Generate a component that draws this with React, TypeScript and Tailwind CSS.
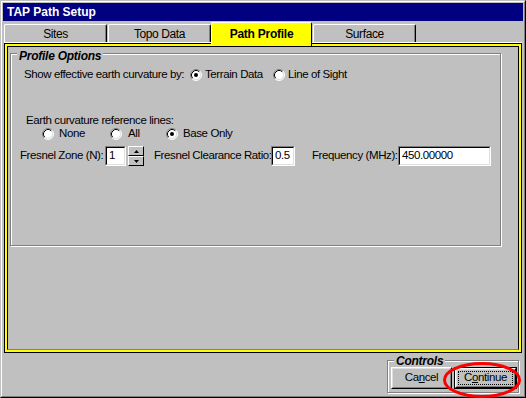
import React from "react";

const ui = "font-['Liberation_Sans',Arial,sans-serif] tracking-[-0.4px] whitespace-nowrap";
const heading = "font-['Liberation_Sans',Arial,sans-serif] font-bold italic tracking-[-0.25px]";

function Radio({ checked = false }: { checked?: boolean }) {
  return (
    <svg width="12" height="12" viewBox="0 0 12 12" className="shrink-0">
      <circle cx="6" cy="6" r="5" fill="#fff" />
      <path d="M2.11 9.89 A5.5 5.5 0 0 1 9.89 2.11" fill="none" stroke="#808080" strokeWidth="1" />
      <path d="M9.89 2.11 A5.5 5.5 0 0 1 2.11 9.89" fill="none" stroke="#fff" strokeWidth="1" />
      <path d="M2.82 9.18 A4.5 4.5 0 0 1 9.18 2.82" fill="none" stroke="#000" strokeWidth="1" />
      <path d="M9.18 2.82 A4.5 4.5 0 0 1 2.82 9.18" fill="none" stroke="#dfdfdf" strokeWidth="1" />
      {checked && <circle cx="6" cy="6" r="2" fill="#000" />}
    </svg>
  );
}

function Field({ value, width }: { value: string; width: string }) {
  return (
    <div className={`${width} h-[20px] border border-t-[#808080] border-l-[#808080] border-r-white border-b-white`}>
      <div className="h-full border border-t-black border-l-black border-r-[#dfdfdf] border-b-[#dfdfdf] bg-white pl-[2px] flex items-center text-[11.5px] leading-none">
        {value}
      </div>
    </div>
  );
}

function SpinButton({ up }: { up?: boolean }) {
  return (
    <div className="h-[10px] border border-t-white border-l-white border-r-black border-b-black bg-[#c0c0c0] flex items-center justify-center">
      <svg width="5" height="3" viewBox="0 0 5 3">
        {up ? <path d="M2.5 0 L5 3 L0 3 Z" fill="#000" /> : <path d="M0 0 L5 0 L2.5 3 Z" fill="#000" />}
      </svg>
    </div>
  );
}

function Tab({ label, active, width }: { label: string; active?: boolean; width: string }) {
  if (active) {
    return (
      <div className={`${width} relative z-10 h-[24px] -mb-[4px] bg-[#ffff00] border-t border-l border-r border-t-white border-l-white border-r-black rounded-t-[2px] flex justify-center pt-[4px] text-[12px] font-bold tracking-[-0.25px] leading-[15px]`}>
        {label}
      </div>
    );
  }
  return (
    <div className={`${width} h-[18px] border-t border-l border-r border-t-white border-l-white border-r-black shadow-[inset_-1px_0_0_#808080] rounded-t-[2px] flex justify-center pt-[2px] text-[12px] leading-[15px]`}>
      {label}
    </div>
  );
}

export default function App() {
  return (
    <div className={`${ui} relative w-[526px] h-[398px] bg-[#c0c0c0] text-black border border-t-[#c0c0c0] border-l-[#c0c0c0] border-r-black border-b-black select-none`}>
      <div className="flex flex-col h-full border border-t-white border-l-white border-r-[#808080] border-b-[#808080] pt-px px-px">
        {/* title bar */}
        <div className="h-[18px] bg-[#000080] flex items-center pl-[4px]">
          <span className="text-[12px] font-bold text-white leading-none tracking-normal">TAP Path Setup</span>
        </div>

        {/* tabs */}
        <div className="h-[21px] flex items-end pl-px">
          <Tab label="Sites" width="w-[103px]" />
          <div className="ml-px" />
          <Tab label="Topo Data" width="w-[103px]" />
          <Tab label="Path Profile" width="w-[101px]" active />
          <div className="ml-px" />
          <Tab label="Surface" width="w-[103px]" />
        </div>

        {/* tab panel */}
        <div className="ml-px w-[518px] h-[311px] border-t border-white">
          <div className="h-full border border-black">
            <div className="h-full border-2 border-[#ffff00]">
              <div className="h-full border border-t-black border-l-black border-r-black border-b-[#808080] pt-[6px] pl-[2px]">
                <div className="relative w-[491px] h-[193px] border border-[#808080] shadow-[inset_1px_1px_0_#fff,1px_1px_0_#fff] text-[11.5px] leading-none">
                  <span className={`${heading} absolute left-[6px] -top-[4px] px-[2px] bg-[#c0c0c0] text-[12px]`}>Profile Options</span>

                  <div className="mt-[13px] h-[16px] flex items-center pl-[13px]">
                    <span className="w-[166px]">Show effective earth curvature by:</span>
                    <Radio checked />
                    <span className="ml-[3px] w-[68px]">Terrain Data</span>
                    <Radio />
                    <span className="ml-[3px]">Line of Sight</span>
                  </div>

                  <div className="mt-[31px] h-[13px] flex items-center pl-[15px]">
                    Earth curvature reference lines:
                  </div>

                  <div className="h-[13px] flex items-center pl-[31px]">
                    <Radio />
                    <span className="ml-[5px] w-[51px]">None</span>
                    <Radio />
                    <span className="ml-[6px] w-[38px]">All</span>
                    <Radio checked />
                    <span className="ml-[5px]">Base Only</span>
                  </div>

                  <div className="mt-[6px] h-[20px] flex items-center pl-[9px]">
                    <span className="w-[85px]">Fresnel Zone (N):</span>
                    <Field value="1" width="w-[21px]" />
                    <div className="ml-[2px] w-[16px] flex flex-col">
                      <SpinButton up />
                      <SpinButton />
                    </div>
                    <span className="ml-[10px] w-[117px]">Fresnel Clearance Ratio:</span>
                    <Field value="0.5" width="w-[24px]" />
                    <span className="ml-[17px] w-[86px]">Frequency (MHz):</span>
                    <Field value="450.00000" width="w-[93px]" />
                  </div>
                </div>
              </div>
            </div>
          </div>
        </div>

        {/* bottom controls */}
        <div className="flex-1 flex justify-end pr-[4px]">
          <div className="relative mt-[7px] w-[132px] h-[33px] border border-[#808080] shadow-[inset_1px_1px_0_#fff,1px_1px_0_#fff]">
            <span className={`${heading} absolute left-[6px] -top-[6px] px-[2px] bg-[#c0c0c0] text-[12px] leading-none`}>Controls</span>
            <div className="mt-[6px] ml-[3px] flex text-[11.5px] leading-none">
              <div className="w-[61px] h-[22px] border border-t-white border-l-white border-r-black border-b-black">
                <div className="h-full border border-t-[#dfdfdf] border-l-[#dfdfdf] border-r-[#808080] border-b-[#808080] flex items-center justify-center">
                  <span>Ca<u>n</u>cel</span>
                </div>
              </div>
              <div className="ml-[2px] w-[63px] h-[22px] border border-black">
                <div className="h-full border border-t-white border-l-white border-r-black border-b-black">
                  <div className="h-full border border-t-[#dfdfdf] border-l-[#dfdfdf] border-r-[#808080] border-b-[#808080] p-[1px]">
                    <div className="h-full border border-dotted border-black flex items-center justify-center">
                      <span>C<u>o</u>ntinue</span>
                    </div>
                  </div>
                </div>
              </div>
            </div>
          </div>
        </div>
      </div>

      {/* red annotation ring */}
      <svg className="absolute left-[440px] top-[359px] pointer-events-none" width="86" height="39" viewBox="0 0 86 39">
        <ellipse cx="41" cy="20" rx="37.5" ry="16.5" fill="none" stroke="#ff0000" strokeWidth="3" />
      </svg>
    </div>
  );
}
